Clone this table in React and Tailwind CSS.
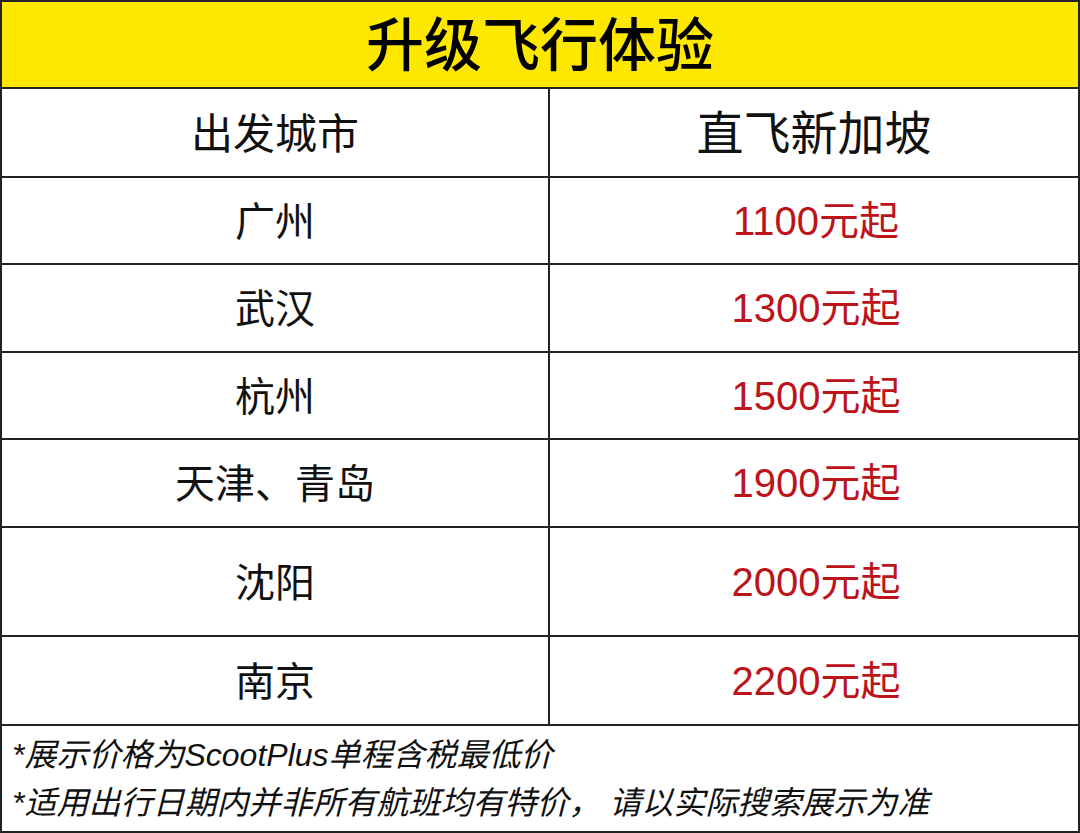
const rows = [
  { city: "广州", price: "1100元起", h: "h-[87px]" },
  { city: "武汉", price: "1300元起", h: "h-[88px]" },
  { city: "杭州", price: "1500元起", h: "h-[87px]" },
  { city: "天津、青岛", price: "1900元起", h: "h-[88px]" },
  { city: "沈阳", price: "2000元起", h: "h-[109px]" },
  { city: "南京", price: "2200元起", h: "h-[89px]" },
];

function Row({ city, price, h }) {
  return (
    <div className={`flex border-b-2 border-[#222] ${h}`}>
      <div className="flex w-[548px] items-center justify-center border-r-2 border-[#222] text-[40px] text-[#111]">
        {city}
      </div>
      <div
        className="flex flex-1 items-center justify-center pl-[4px] text-[40px] text-[#bd131b]"
        style={{ fontFamily: '"Liberation Sans", "Noto Sans CJK SC", sans-serif' }}
      >
        {price}
      </div>
    </div>
  );
}

export default function App() {
  return (
    <div
      className="flex h-[833px] w-[1080px] flex-col border-2 border-[#222] bg-white"
      style={{ fontFamily: '"Noto Sans", "Noto Sans CJK SC", sans-serif' }}
    >
      <div className="flex h-[87px] items-center justify-center border-b-2 border-[#222] bg-[#ffe800] pb-[2px] text-[58px] font-medium text-black">
        升级飞行体验
      </div>
      <div className="flex h-[89px] border-b-2 border-[#222]">
        <div className="flex w-[548px] items-center justify-center border-r-2 border-[#222] text-[42px] text-[#111]">
          出发城市
        </div>
        <div className="flex flex-1 items-center justify-center text-[47px] text-[#111]">
          直飞新加坡
        </div>
      </div>
      {rows.map((r) => (
        <Row key={r.city} {...r} />
      ))}
      <div
        className="flex-1 pl-[10px] pt-[5px] text-[32px] italic leading-[48px] text-[#111]"
        style={{ fontFamily: '"Liberation Sans", "Noto Sans CJK SC", sans-serif' }}
      >
        <div>*展示价格为ScootPlus单程含税最低价</div>
        <div>*适用出行日期内并非所有航班均有特价， 请以实际搜索展示为准</div>
      </div>
    </div>
  );
}
